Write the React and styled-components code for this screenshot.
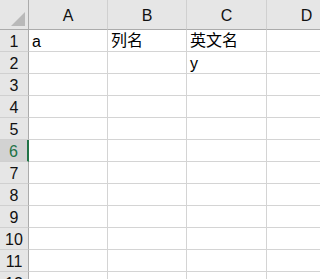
import React from "react";
import styled, { createGlobalStyle } from "styled-components";

const columns = ["A", "B", "C", "D"];
const data = {
  1: { A: "a", B: "列名", C: "英文名" },
  2: { C: "y" },
};
const rows = Array.from({ length: 12 }, (_, i) => i + 1);
const activeRow = 6;

const App = () => {
  return (
    <>
      <GlobalStyle />
      <StSheet>
        <StCorner>
          <StTriangle />
        </StCorner>
        {columns.map((c) => (
          <StColHead key={c}>{c}</StColHead>
        ))}
        {rows.map((r) => (
          <React.Fragment key={r}>
            <StRowHead $active={r === activeRow}>{r}</StRowHead>
            {columns.map((c) => (
              <StCell key={c}>{data[r]?.[c] || ""}</StCell>
            ))}
          </React.Fragment>
        ))}
      </StSheet>
    </>
  );
};

export default App;

const GlobalStyle = createGlobalStyle`
  body {
    margin: 0;
    background: #ffffff;
    overflow: hidden;
  }
`;

const StSheet = styled.div`
  display: grid;
  grid-template-columns: 29px 79px 79px 80px 80px;
  grid-template-rows: 30px repeat(12, 22px);
  width: 320px;
  height: 279px;
  overflow: hidden;
  font-family: "Liberation Sans", "Noto Sans CJK SC", sans-serif;
  font-size: 16px;
  color: #000;
`;

const StCorner = styled.div`
  position: relative;
  background: #e6e6e6;
  border-right: 1px solid #ababab;
  border-bottom: 1px solid #ababab;
`;

const StTriangle = styled.div`
  position: absolute;
  right: 3px;
  bottom: 3px;
  width: 0;
  height: 0;
  border-left: 14px solid transparent;
  border-bottom: 14px solid #b9b9b9;
`;

const StColHead = styled.div`
  display: flex;
  align-items: center;
  justify-content: center;
  padding-top: 3px;
  background: #e6e6e6;
  border-right: 1px solid #d0d0d0;
  border-bottom: 1px solid #ababab;
  color: #111;
`;

const StRowHead = styled.div`
  display: flex;
  align-items: flex-end;
  justify-content: center;
  padding-bottom: 0;
  box-sizing: border-box;
  background: ${(p) => (p.$active ? "#d2d2d2" : "#e6e6e6")};
  color: ${(p) => (p.$active ? "#217346" : "#111")};
  border-right: ${(p) => (p.$active ? "2px solid #217346" : "1px solid #ababab")};
  border-bottom: 1px solid #d0d0d0;
`;

const StCell = styled.div`
  display: flex;
  align-items: flex-end;
  padding: 0 0 0 3px;
  box-sizing: border-box;
  white-space: nowrap;
  border-right: 1px solid #d4d4d4;
  border-bottom: 1px solid #d4d4d4;
`;
